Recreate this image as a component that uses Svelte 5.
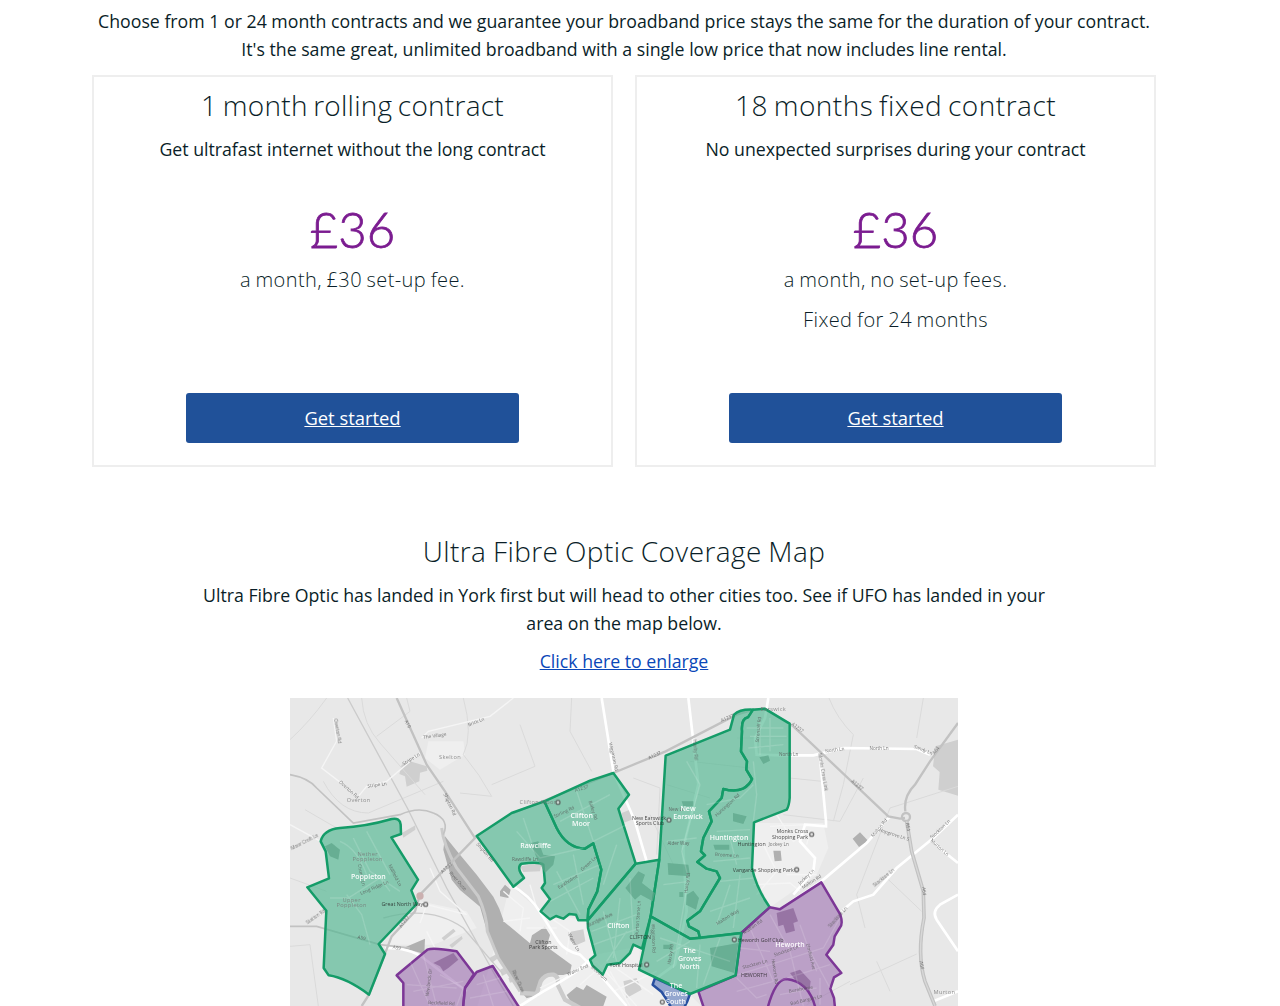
<script>
  const plans = [
    {
      title: '1 month rolling contract',
      width: 'rolling',
      summary: 'Get ultrafast internet without the long contract',
      price: '£36',
      terms: ['a month, £30 set-up fee.']
    },
    {
      title: '18 months fixed contract',
      width: 'fixed',
      summary: 'No unexpected surprises during your contract',
      price: '£36',
      terms: ['a month, no set-up fees.', 'Fixed for 24 months']
    }
  ];

  // Coverage areas, in map units (three per pixel)
  const areas = [
    { tone: 'green', d: 'M92 430Q100 395 150 390Q230 385 305 363Q330 358 332 380L333 408L304 418L384 545L364 577L380 618L266 738L285 768L237 890Q170 840 116 832L101 810L109 638L52 568L117 541L107 460Z' },
    { tone: 'green', d: 'M560 414L665 345L763 310L800 390Q830 450 885 452L910 436L934 515L922 580L895 635L893 667L865 667L858 650L838 648L820 662L798 654L780 664L752 640L780 604L755 570L765 555L760 500Q750 490 695 497Q682 505 692 525L702 540L670 566L612 485Z' },
    { tone: 'green', d: 'M763 310L900 248L970 225L1017 290L985 332L1037 497L893 667L895 635L922 580L934 515L910 436L885 452Q830 450 800 390Z' },
    { tone: 'green', d: 'M1037 497L1108 485L1082 655L1056 752L1030 740L1020 765L990 795L952 800L938 830L908 803L900 785L916 772L894 690L893 667Z' },
    { tone: 'green', d: 'M1127 173L1320 95L1332 50Q1350 33 1389 35L1374 58Q1353 62 1356 100L1353 160L1371 190L1369 215L1386 243Q1380 260 1359 272Q1335 283 1300 273L1295 300L1257 340L1265 370L1240 420L1233 460L1245 472L1222 492L1250 512L1280 520L1290 540L1260 590L1230 640L1192 668L1197 685L1225 700L1230 720L1200 722L1082 655L1108 485Z' },
    { tone: 'green', d: 'M1389 35L1424 32L1499 77L1499 300Q1497 325 1490 335L1392 373L1386 510Q1399 570 1439 628L1354 705L1230 720L1225 700L1197 685L1192 668L1230 640L1260 590L1290 540L1280 520L1250 512L1222 492L1245 472L1233 460L1240 420L1265 370L1257 340L1295 300L1300 273Q1335 283 1359 272Q1380 260 1386 243L1369 215L1371 190L1353 160L1356 100Q1353 62 1374 58Z' },
    { tone: 'purple', d: 'M340 940L340 855L320 832L412 755Q430 748 500 760L552 828L525 870L518 940Z' },
    { tone: 'purple', d: 'M518 940L525 870L560 822L608 804L695 940Z' },
    { tone: 'purple', d: 'M1439 628L1469 634L1594 553L1651 650Q1660 680 1649 690L1634 715L1630 740L1609 770L1654 825L1632 838L1621 872L1632 900L1636 940L1245 940L1225 880L1337 832L1354 705Z' },
    { tone: 'purple outline', d: 'M1430 940Q1455 843 1489 843Q1560 850 1579 940Z' },
    { tone: 'blue', d: 'M1095 840L1200 888Q1190 920 1175 940L1150 940L1130 905L1115 882L1088 860Z' },
    { tone: 'green', d: 'M1082 655L1200 722L1354 705L1337 832L1200 888L1047 815Z' }
  ];

  const districts = [
    ['Poppleton', 235, 542], ['Rawcliffe', 737, 450], ['Clifton', 875, 359], ['Moor', 873, 383],
    ['New', 1194, 340], ['Earswick', 1194, 364], ['Huntington', 1317, 425], ['Clifton', 985, 691],
    ['The', 1199, 766], ['Groves', 1199, 790], ['North', 1199, 813], ['Heworth', 1500, 747],
    ['The', 1158, 870], ['Groves', 1158, 895], ['South', 1158, 918]
  ];

  // text, x, y, rotation, style
  const places = [
    ['Skelton', 480, 183, 0, 'town'], ['Overton', 206, 312, 0, 'town'], ['Murton', 1963, 887, 0, 'town'],
    ['Nether', 233, 473, 0, 'town'], ['Poppleton', 233, 490, 0, 'town'],
    ['Upper', 185, 612, 0, 'town'], ['Poppleton', 185, 628, 0, 'town'],
    ['Great North Way', 337, 625, 0, 'poi'], ['New Earswick', 1077, 365, 0, 'poi'],
    ['Sports Club', 1080, 381, 0, 'poi'], ['Clifton', 760, 737, 0, 'poi'], ['Park Sports', 760, 753, 0, 'poi'],
    ['York Hospital', 1008, 806, 0, 'poi'], ['Monks Cross', 1507, 406, 0, 'poi'],
    ['Shopping Park', 1500, 423, 0, 'poi'], ['Vangarde Shopping Park', 1420, 522, 0, 'poi'],
    ['Heworth Golf Club', 1412, 731, 0, 'poi'], ['Huntington', 1385, 445, 0, 'poi'],
    ['Earswick', 1450, 40, 0, 'town'], ['CLIFTON', 1051, 722, 0, 'poi'], ['HEWORTH', 1392, 836, 0, 'poi'],
    ['Clifton Moor', 744, 319, 0, 'town'], ['A19', 349, 80, 65, 'road'], ['Brick Ln', 560, 76, -22, 'road'],
    ['The Village', 435, 118, -8, 'road'], ['Stripe Ln', 366, 187, -32, 'road'],
    ['Overton Rd', 138, 100, 80, 'road'], ['Overton Rd', 174, 278, 42, 'road'], ['Stripe Ln', 262, 265, -8, 'road'],
    ['Shipton Rd', 475, 321, 65, 'road'], ['A1237', 473, 513, -42, 'road'], ['River Ouse', 500, 552, 49, 'road'],
    ['Shipton Rd', 582, 466, 48, 'road'], ['A1237', 346, 674, -52, 'road'], ['A59', 214, 724, 12, 'road'],
    ['A59', 320, 754, 10, 'road'], ['Long Ridge Ln', 255, 573, -23, 'road'], ['Millfield Ln', 311, 534, 62, 'road'],
    ['Church Ln', 210, 532, 78, 'road'], ['Station Rd', 80, 660, -35, 'road'], ['Newlands Dr', 421, 854, -83, 'road'],
    ['Beckfield Rd', 454, 920, 3, 'road'], ['Moor Croft Ln', 46, 436, -27, 'road'],
    ['River Ouse', 680, 852, 66, 'road'], ['A1237', 876, 276, -17, 'road'], ['A1237', 1096, 176, -24, 'road'],
    ['A1237', 1314, 64, -24, 'road'], ['Wigginton Rd', 966, 177, 77, 'road'], ['Haxby Rd', 1211, 156, 85, 'road'],
    ['Stirling Rd', 824, 346, -25, 'road'], ['Bailey Rd', 905, 338, 72, 'road'], ['Rawcliffe Ln', 705, 488, 0, 'road'],
    ['Green Ln', 899, 500, -42, 'road'], ['Eastholme', 836, 555, -32, 'road'], ['Haxby Rd', 1196, 556, -82, 'road'],
    ['Burdyke Ave', 932, 670, -25, 'road'], ['Water Ln', 848, 735, 62, 'road'],
    ['Burton Stone Ln', 1048, 661, -86, 'road'], ['Wigginton Rd', 1086, 721, 88, 'road'],
    ['Haxby Rd', 1146, 770, -82, 'road'], ['Water End', 865, 820, -24, 'road'], ['Bootham', 925, 830, 43, 'road'],
    ['Alder Way', 1165, 440, 0, 'road'], ['New Ln', 1160, 340, 0, 'road'], ['Huntington Rd', 1315, 325, -43, 'road'],
    ['Broome Ln', 1310, 476, 4, 'road'], ['Malton Way', 1315, 661, -32, 'road'], ['North Ln', 1496, 175, 0, 'road'],
    ['North Ln', 1635, 160, -8, 'road'], ['North Ln', 1767, 155, 0, 'road'], ['Sandy Ln', 1898, 160, 22, 'road'],
    ['A1237', 1520, 92, 38, 'road'], ['A1237', 1698, 265, 39, 'road'], ['A64', 1941, 160, -52, 'road'],
    ['A64', 1850, 387, 82, 'road'], ['A64', 1898, 580, 83, 'road'], ['A64', 1891, 803, 78, 'road'],
    ['Monks Cross Link', 1594, 223, 80, 'road'], ['Malton Rd', 1771, 393, -50, 'road'],
    ['Hopgrove Ln S', 1811, 414, 18, 'road'], ['Stockton Ln', 1954, 397, -43, 'road'],
    ['Stockton Ln', 1784, 543, -39, 'road'], ['Murton Ln', 1946, 452, 42, 'road'],
    ['Malton Rd', 1567, 555, -32, 'road'], ['Jockey Ln', 1552, 540, -43, 'road'],
    ['Stockton Ln', 1647, 661, -48, 'road'], ['Stockton Ln', 1490, 763, -19, 'road'],
    ['Stockton Ln', 1396, 803, -15, 'road'], ['Malton Rd', 1391, 690, -35, 'road'],
    ['Strensall Rd', 1410, 95, -84, 'road'], ['Elmfield Ave', 1558, 777, 76, 'road'],
    ['Burnholme', 1533, 878, -10, 'road'], ['Bad Bargain Ln', 1550, 910, -14, 'road'],
    ['Heworth Rd', 1450, 821, 82, 'road'], ['Jockey Ln', 1466, 443, 0, 'road']
  ];

  const markers = [[407, 619], [804, 313], [1137, 366], [1070, 800], [1565, 409], [1520, 515], [1333, 725], [1117, 912]];
</script>

<main>
  <p class="intro">
    Choose from 1 or 24 month contracts and we guarantee your broadband price stays the same for the duration of your contract.<br />
    It's the same great, unlimited broadband with a single low price that now includes line rental.
  </p>

  <section class="plans">
    {#each plans as plan}
      <article class="card">
        <h2 class={plan.width}>{plan.title}</h2>
        <p class="summary">{plan.summary}</p>
        <p class="price">{plan.price}</p>
        <div class="terms">
          {#each plan.terms as term}<p>{term}</p>{/each}
        </div>
        <a class="button" href="#start">Get started</a>
      </article>
    {/each}
  </section>

  <section class="coverage">
    <h2>Ultra Fibre Optic Coverage Map</h2>
    <p>
      Ultra Fibre Optic has landed in York first but will head to other cities too. See if UFO has landed in your<br />
      area on the map below.
    </p>
    <a class="enlarge" href="#map">Click here to enlarge</a>

    <svg class="map" viewBox="0 0 2004 924" role="img" aria-label="York coverage map">
      <rect width="2004" height="924" fill="#e8e8e8" />
      <g class="soft">
        <!-- built-up ground -->
        <g fill="#efefef">
          <path d="M660 560L750 640L890 670L915 770L1050 745L1047 815L1200 890L1240 930H560L600 800Z" />
          <path d="M1390 375L1600 375L1615 450L1580 530L1440 628L1387 510Z" />
          <path d="M390 610L530 640L560 690L430 740L290 740Z" />
          <path d="M415 130L520 130L525 170L450 215L405 180Z" />
        </g>
        <g fill="#cfcfcf">
          <path d="M335 200L360 190L410 205L412 218L390 224L388 250L350 266L345 235L328 228Z" />
          <path d="M336 405L376 382L376 395L340 419Z" />
          <path d="M1936 145L2004 125V293L1945 275L1949 222L1929 205Z" />
          <path d="M995 345L1020 335L1025 365L1000 375ZM690 505L755 495L750 520L700 522ZM1000 850L1040 840L1055 875L1010 900Z" />
          <path d="M455 720L490 692L497 700L462 728ZM478 742L515 714L518 722L486 750ZM835 703L880 694L886 730L858 742L838 726Z" />
          <path d="M598 780L620 768L628 778L606 794ZM630 815L645 808L652 826L636 834ZM655 840L672 834L676 850L660 854Z" />
        </g>
        <g fill="#b0b0b0">
          <path d="M465 415L500 458L560 530L610 596L628 632L642 671L720 736L726 712L765 686L780 711L770 746L845 801L840 825L820 831L770 831L750 856L745 890L710 901L680 866L620 776L590 696L570 626L510 576L485 545L460 455Z" />
          <path d="M830 891L860 866L880 876L890 861L950 896L940 924H850Z" />
          <path d="M630 580L645 560L662 575L655 600L630 595ZM340 750L405 722L403 768Z" />
          <path d="M1688 422L1710 403L1734 428L1707 447ZM1450 458H1472L1475 488L1454 490Z" />
        </g>
        <!-- field boundaries and railway -->
        <g fill="none" stroke="#dadada" stroke-width="3">
          <path d="M0 125Q60 70 110 0M215 0Q220 80 270 135L405 290M520 0Q550 110 520 170Q570 230 605 295L510 285M605 260L735 205L690 80M845 0L840 100L905 220M100 250Q150 345 235 345L460 250M0 540L110 580M0 745L60 740L85 924M1030 240L1110 270L1100 470M1617 0Q1640 60 1690 110L1660 260L1630 370M1900 0L1880 120M2004 265L1800 330L1700 590L1725 690M1500 240L1595 250M1680 860L1880 768M1550 920L1680 850M1790 540L1895 640M1760 790L1800 880" />
          <path d="M45 335L140 390M350 0L360 40L260 115M1200 190L1380 210M1720 240L1650 370L1480 350M1130 260L1260 300M1080 350L1150 500M1340 120L1490 120" />
        </g>
        <g fill="none" stroke="#cbcbcb" stroke-width="4">
          <path d="M173 0L352 330L470 570L620 840L670 924M280 660Q420 620 520 690L640 830" />
          <path d="M455 390Q460 440 500 510L565 595Q590 650 592 700L625 780L690 880" stroke-width="9" />
          <path d="M690 885L740 888L752 850Q765 827 790 830Q808 836 803 860L825 905L870 930" stroke-width="13" />
        </g>
        <!-- local streets -->
        <g fill="none" stroke="#f5f5f5" stroke-width="4">
          <path d="M145 120L95 210L205 295L230 265L290 250L390 165M130 60L140 130M395 120L415 100L600 55L670 0M0 380L92 430M60 670L110 635M420 510L450 580L530 650L410 620L390 675M410 700L435 750" />
          <path d="M640 580L700 630L690 700M640 670L720 660M720 560L740 630L840 700L830 770M710 690L800 690" />
          <path d="M750 870L920 790L1040 924M870 860L950 790L1090 890M970 880L1100 820M960 820L1020 924" />
          <path d="M1440 385L1550 380M1460 350L1510 430L1560 400L1550 440M1390 560L1500 555L1530 580M1400 590L1460 520L1420 440M1490 530L1580 530" />
        </g>
        <g fill="none" stroke="#fff" stroke-width="8">
          <path d="M935 0L970 220L1035 370L1070 490M1195 0L1225 260L1180 450L1190 640L1155 800L1100 840" />
          <path d="M660 560Q720 590 755 650L805 730Q825 760 870 770L930 830L1010 924M690 924L760 880Q815 850 855 823L900 785" />
          <path d="M1480 172H1570L1660 150L1880 153L1920 170M1590 180L1608 370L1608 385L1545 380L1530 430L1575 480L1570 520L1510 590M1470 633L1594 550L1730 435L1800 355" />
          <path d="M1654 640L1690 610L1750 590L1820 510L1930 420L2004 350M1930 430L1960 460L2004 495M2004 590L1950 620Q1925 640 1940 665L2004 760M1930 910L2004 880" />
          <path d="M1435 0L1425 60L1395 120L1400 170L1480 172" />
          <path d="M286 750Q360 750 400 780L530 880" />
        </g>
        <!-- main roads -->
        <g fill="none" stroke="#c2c2c2" stroke-width="7">
          <path d="M320 0L410 200L465 280L555 420L390 590L375 640L305 715L237 890L215 924" />
          <path d="M0 230Q55 240 80 270L190 375L330 350Q385 325 430 345Q480 365 460 410M0 685H80L270 740L360 750" stroke-width="5" />
          <path d="M670 345L970 225L1127 160L1340 50L1390 35L1424 32L1510 85L1795 355L1830 362L1845 360M1846 340Q1840 295 1875 260L1920 190L2004 75M1850 370L1865 460L1900 580L1902 660Q1880 770 1905 850L1935 924" />
          <circle cx="1848" cy="357" r="12" />
        </g>
        <path d="M1850 370L1865 460L1900 580L1902 660Q1880 770 1905 850L1935 924" fill="none" stroke="#c2c2c2" stroke-width="11" />
        <path d="M1850 370L1865 460L1900 580L1902 660Q1880 770 1905 850L1935 924" fill="none" stroke="#d8d8d8" stroke-width="4" />
        <circle cx="390" cy="594" r="11" fill="#cbb0b0" />
      </g>

      <g class="soft">
        {#each areas as area}<path class={area.tone} d={area.d} />{/each}
        <!-- streets and grounds showing through the overlays -->
        <g fill="#5ea68a" opacity=".75">
          <path d="M105 445L125 435L150 455L145 485L120 475ZM1133 495L1195 500L1200 535L1135 530ZM1190 590L1210 578L1227 600L1218 635L1188 620Z" />
          <path d="M1006 570L1045 520L1065 530L1056 555L1095 585L1088 610L1052 590L1035 605ZM1260 750L1345 735L1333 825L1265 805ZM722 435L745 430L760 470L795 475L790 500L765 525L740 480Z" />
          <path d="M1408 178L1435 172L1440 188L1420 198ZM1175 310H1210V325H1180ZM1120 740H1145V753H1120ZM1270 440H1318V455H1275ZM1329 345L1370 355L1360 378L1329 370ZM1168 582H1180V597H1168Z" />
        </g>
        <g fill="#80568d" opacity=".6">
          <path d="M1460 645L1510 630L1524 670L1510 675L1515 698L1488 706L1480 680L1465 685ZM430 795L490 765L505 785L475 810L460 820L450 805ZM1500 825L1530 815L1562 850L1558 880L1515 845Z" />
        </g>
        <g class="streets">
          <path d="M120 600L175 600L270 540L300 580M170 590L215 650L240 740M190 420L240 520L330 580M230 400L300 530M150 430Q200 450 230 530" />
          <path d="M680 400L750 480L880 450M700 360L730 450M790 560L930 500M780 610L910 540M800 520L870 650M850 470L880 620M810 370L960 290M860 280L910 430M910 430L1010 380M940 560L980 440M905 700L1040 650M910 740L1050 690M940 640L980 790M990 600L970 780M1020 540L1030 720M950 790L1010 700" />
          <path d="M1190 190L1230 260L1175 460L1195 540L1150 810M1130 430L1220 420M1120 560L1200 550M1250 320L1350 300L1390 260M1280 400L1380 395M1270 490L1380 480M1290 550L1390 540M1260 640L1380 600M1280 680L1320 560M1330 690L1350 530M1320 420L1340 500M1370 90H1480M1380 115H1490M1375 150L1480 140M1410 70V170M1440 60V160M1390 190L1400 290L1390 370M1110 720L1320 790M1100 790L1200 730M1230 740L1220 870M1290 720L1240 860" />
          <path d="M350 860L500 870M360 790L420 924M400 770L440 924M370 880L520 850M450 830L520 870L500 924M560 860L630 840M540 900L650 880M580 830L610 924M1345 830L1600 750L1650 660M1380 690L1450 850M1440 650L1500 760L1540 924M1530 680L1580 820M1340 880L1450 850M1460 850L1620 800M1560 760L1620 870M1590 840V920M1470 890L1580 870M1350 750L1440 760M1340 840L1400 900L1430 890" />
        </g>
      </g>

      <g class="places">
        {#each places as [label, x, y, angle, kind]}
          <text class={kind} transform="translate({x} {y}) rotate({angle})">{label}</text>
        {/each}
        {#each markers as [cx, cy]}
          <circle {cx} {cy} r="6" fill="#ddd" stroke="#555" stroke-width="4" />
        {/each}
      </g>
      <g class="districts">
        {#each districts as [name, x, y]}<text {x} {y}>{name}</text>{/each}
      </g>
    </svg>
  </section>
</main>

<style>
  :global(body) {
    background: #fff;
    overflow: hidden;
  }

  main {
    width: 1064px;
    height: 1006px;
    margin-left: 92px;
    overflow: hidden;
    color: #0a1e28;
    font: 17.73px/28px 'Open Sans', sans-serif;
    text-align: center;
  }

  p, h2 { margin: 0; }

  .intro {
    padding-top: 7px;
    height: 68px;
    white-space: nowrap;
  }

  h2 {
    font-size: 28px;
    font-weight: 300;
    letter-spacing: 0.4px;
    line-height: 36px;
    white-space: nowrap;
    word-spacing: -1px;
  }

  .rolling {
    letter-spacing: 0.25px;
    word-spacing: -2px;
  }

  .fixed {
    letter-spacing: 0.5px;
    word-spacing: -2px;
  }

  .plans {
    display: grid;
    grid-template-columns: 1fr 1fr;
    gap: 22px;
  }

  .card {
    box-sizing: border-box;
    height: 392px;
    padding-top: 10px;
    border: 2px solid #eee;
    display: flex;
    flex-direction: column;
    align-items: center;
  }

  .summary { margin-top: 12px; }

  .price {
    margin-top: 37px;
    color: #7b1c90;
    font: 300 49px/58px Lato, sans-serif;
    -webkit-text-stroke: 0.8px #7b1c90;
  }

  .terms {
    height: 105px;
    margin-top: 2px;
    font-size: 20px;
    font-weight: 300;
    letter-spacing: 0.4px;
    line-height: 40px;
    word-spacing: -1px;
  }

  .button {
    width: 333px;
    height: 50px;
    margin-top: 28px;
    border-radius: 3px;
    background: #205199;
    color: #fff;
    font-size: 18.4px;
    line-height: 49px;
  }

  .coverage {
    padding-top: 66px;
    display: flex;
    flex-direction: column;
    align-items: center;
  }

  .coverage p {
    margin-top: 12px;
    white-space: nowrap;
  }

  .enlarge {
    margin-top: 10px;
    color: #0a47b8;
  }

  .map {
    display: block;
    width: 668px;
    height: 308px;
    margin-top: 23px;
  }

  .soft { filter: blur(1.2px); }

  .green { fill: #49b58c; fill-opacity: 0.62; stroke: #149c68; }
  .purple { fill: #9564ab; fill-opacity: 0.55; stroke: #7c3796; }
  .blue { fill: #627fbd; fill-opacity: 0.65; stroke: #2850a0; }
  .green, .purple, .blue { stroke-width: 7.5; stroke-linejoin: round; }
  .outline { fill: none; }

  .streets {
    fill: none;
    stroke: #fff;
    stroke-opacity: 0.14;
    stroke-width: 4;
  }

  .places text, .districts text {
    text-anchor: middle;
    font-family: 'Open Sans', sans-serif;
  }

  .places { opacity: 0.8; }
  .town { fill: #777; font-size: 17px; letter-spacing: 1px; }
  .poi { fill: #222; font-size: 16px; }
  .road { fill: #555; font-size: 14px; }
  .districts { fill: #fff; fill-opacity: 0.95; }
  .districts text { font-size: 21px; font-weight: 600; }
</style>
